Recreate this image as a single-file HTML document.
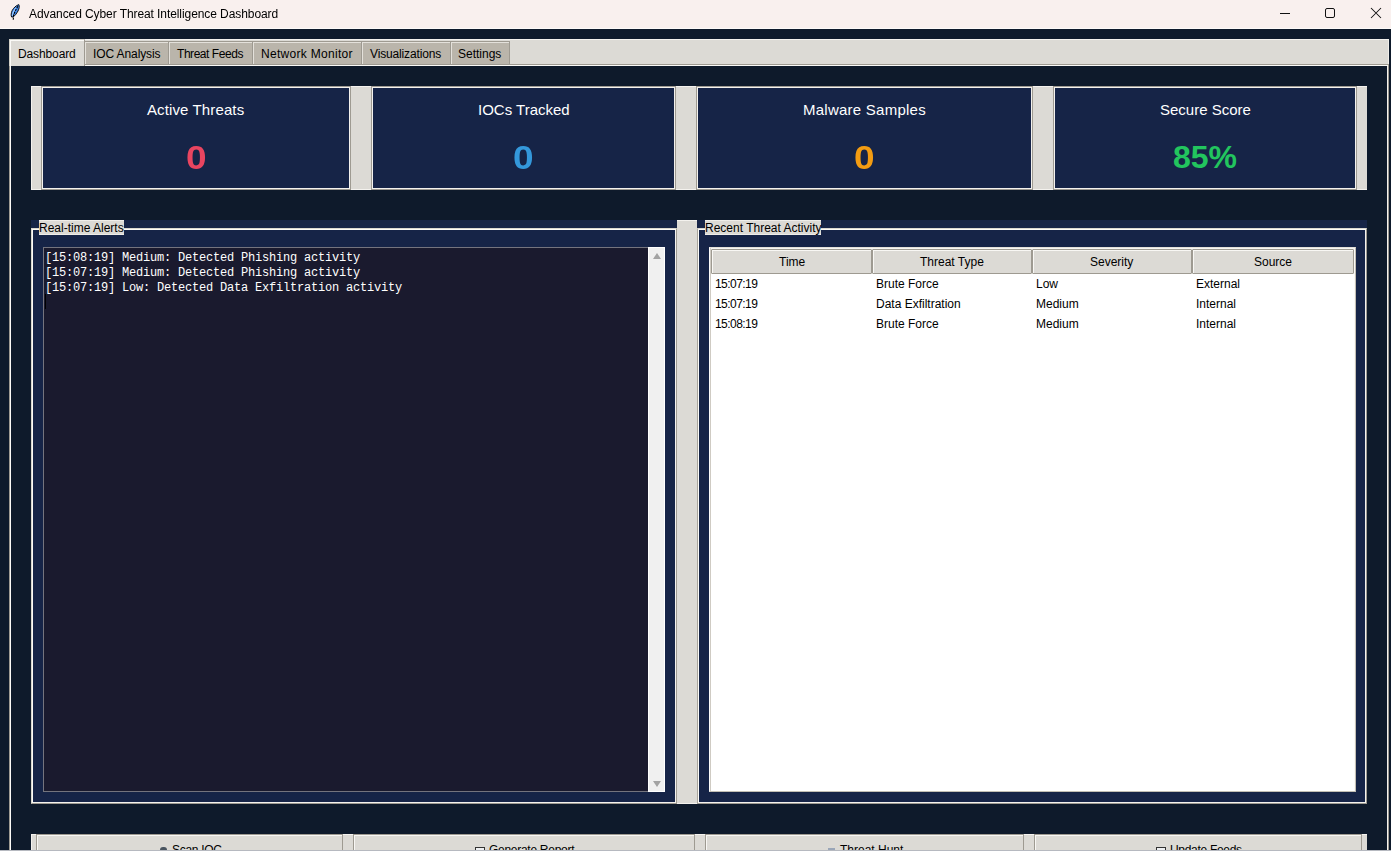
<!DOCTYPE html>
<html><head><meta charset="utf-8">
<style>
*{box-sizing:border-box;margin:0;padding:0}
html,body{width:1391px;height:851px;overflow:hidden;background:#0e1a2b;font-family:"Liberation Sans",sans-serif;font-size:12px;color:#000;position:relative}
.a{position:absolute}
.tx{position:absolute;white-space:pre;line-height:normal}
#title{left:0;top:0;width:1391px;height:29px;background:#f9f0ee}
.tab{top:41px;height:24px;background:#bab5ab;border:1px solid #9e9a91;border-bottom:1px solid #9e9a91;box-shadow:inset 1px 1px 0 #e4e1db}
.strip{background:#dcdad5}
.card{background:#162447;border:1px solid #9e9a91;box-shadow:inset 1px 1px 0 #f4f2ee,inset -1px -1px 0 #f4f2ee}
.ct{color:#fff;font-size:15px}
.cv{font-size:33px;font-weight:700;transform:scaleX(1.12);transform-origin:50% 50%}
.lf{background:#162447}
.lfb{border:1px solid #d9d6cf;border-right-color:#9e9a91;border-bottom-color:#9e9a91;box-shadow:inset 1px 1px 0 #fbfaf7,inset -1px -1px 0 #f4f2ee}
.lbl{background:#dcdad5;border-top:1px solid #efede9;border-bottom:1px solid #efede9}
.th{top:249px;height:25px;background:#dcdad5;border:1px solid #9e9a91;border-radius:1px;box-shadow:inset 1px 1px 0 #f8f7f4}
.btn{top:834px;height:20px;background:#dcdad5;border:1px solid #9e9a91;box-shadow:inset 1px 1px 0 #f8f7f4}
</style></head><body>
<div id="title" class="a"></div>
<div class="a" style="left:0;top:28px;width:1391px;height:1px;background:#fdfaf8"></div>
<svg class="a" style="left:0;top:0" width="30" height="28" viewBox="0 0 30 28">
  <path d="M18.8 4.6 C19.6 6 19.3 8.5 18 11 C16.8 13.3 15 15.6 13.2 17 L11.6 17 C10.9 15.5 11 13 12.2 10.5 C13.6 7.8 16 5.6 18.8 4.6 Z" fill="#3f88ee" stroke="#000" stroke-width="0.9"/>
  <path d="M17.6 6 C15.5 7.5 13.8 9.5 12.8 11.8 C12 13.6 11.9 15 12.1 16.2 L13 15.5 C13.8 12.5 15.5 9 17.6 6 Z" fill="#9ccbff"/>
  <path d="M17.8 6.2 L15.2 11 L13.6 15 L13.2 20.6" fill="none" stroke="#000" stroke-width="1.1" stroke-dasharray="2.2 0.9"/>
</svg>
<div class="tx" style="left:29px;top:7px;font-size:12px;letter-spacing:-0.08px;color:#000;filter:grayscale(1)">Advanced Cyber Threat Intelligence Dashboard</div>
<div class="a" style="left:1280px;top:13px;width:10px;height:1px;background:#111"></div>
<div class="a" style="left:1325px;top:8px;width:10px;height:10px;border:1px solid #111;border-radius:2px"></div>
<svg class="a" style="left:1370px;top:7px" width="12" height="12" viewBox="0 0 12 12"><path d="M1 1 L11 11 M11 1 L1 11" stroke="#111" stroke-width="1.05"/></svg>

<!-- notebook -->
<div class="a" style="left:9px;top:39px;width:1380px;height:25px;background:#dcdad5;border-top:1px solid #f2f0ec"></div>
<div class="a" style="left:1388px;top:39px;width:1px;height:25px;background:#efede9"></div>
<div class="a" style="left:9px;top:64px;width:1380px;height:800px;border:1px solid #9e9a91;box-shadow:inset 1px 1px 0 #fbfaf7,inset -1px 0 0 #f4f2ee"></div>
<!-- selected tab -->
<div class="a" style="left:9px;top:39px;width:76px;height:27px;background:#dcdad5;border-left:1px solid #d2cfc7;border-top:1px solid #d2cfc7;border-right:1px solid #9e9a91;box-shadow:inset 1px 1px 0 #fbfaf7"></div>
<div class="a tab" style="left:84px;width:85px"></div>
<div class="a tab" style="left:168px;width:85px"></div>
<div class="a tab" style="left:252px;width:110px"></div>
<div class="a tab" style="left:361px;width:90px"></div>
<div class="a tab" style="left:450px;width:60px"></div>
<div class="tx" style="left:18px;top:47px;letter-spacing:-0.12px">Dashboard</div>
<div class="tx" style="left:93px;top:47px;letter-spacing:-0.1px">IOC Analysis</div>
<div class="tx" style="left:177px;top:47px;letter-spacing:-0.45px">Threat Feeds</div>
<div class="tx" style="left:261px;top:47px;letter-spacing:0.3px">Network Monitor</div>
<div class="tx" style="left:370px;top:47px;letter-spacing:-0.15px">Visualizations</div>
<div class="tx" style="left:458px;top:47px">Settings</div>

<!-- stats -->
<div class="a strip" style="left:31px;top:86px;width:1336px;height:104px;border-top:1px solid #f4f2ee;border-left:1px solid #f4f2ee;border-bottom:1px solid #f4f2ee"></div>
<div class="a card" style="left:41px;top:86px;width:310px;height:104px"></div>
<div class="a card" style="left:371px;top:86px;width:305px;height:104px"></div>
<div class="a card" style="left:696px;top:86px;width:337px;height:104px"></div>
<div class="a card" style="left:1053px;top:86px;width:304px;height:104px"></div>

<div class="tx ct" style="left:147px;top:101px;letter-spacing:0.12px">Active Threats</div>
<div class="tx ct" style="left:478px;top:101px">IOCs Tracked</div>
<div class="tx ct" style="left:803px;top:101px;letter-spacing:0.25px">Malware Samples</div>
<div class="tx ct" style="left:1160px;top:101px">Secure Score</div>
<div class="tx cv" style="left:187px;top:139px;color:#e94560">0</div>
<div class="tx cv" style="left:514px;top:139px;color:#3498db">0</div>
<div class="tx cv" style="left:855px;top:139px;color:#f39c12">0</div>
<div class="tx cv" style="left:1173px;top:139px;color:#22c55e;font-size:32px;transform:none">85%</div>

<!-- panels -->
<div class="a strip" style="left:677px;top:220px;width:20px;height:584px;border-top:1px solid #f4f2ee;border-bottom:1px solid #f4f2ee"></div>
<div class="a lf" style="left:31px;top:220px;width:646px;height:584px"></div>
<div class="a lfb" style="left:31px;top:228px;width:646px;height:576px"></div>
<div class="a lbl" style="left:39px;top:220px;width:85px;height:15px"></div>
<div class="tx" style="left:39px;top:221px">Real-time Alerts</div>

<div class="a lf" style="left:697px;top:220px;width:670px;height:584px"></div>
<div class="a lfb" style="left:697px;top:228px;width:670px;height:576px;border-left-color:#a9a59c"></div>
<div class="a lbl" style="left:705px;top:220px;width:116px;height:15px"></div>
<div class="tx" style="left:705px;top:221px">Recent Threat Activity</div>

<!-- alerts text -->
<div class="a" style="left:43px;top:247px;width:605px;height:545px;background:#1a1a2e;border:1px solid #74747e;border-right:none"></div>
<div class="tx" style="left:45px;top:251px;font-family:'Liberation Mono',monospace;font-size:12px;letter-spacing:-0.2px;line-height:15px;color:#fff">[15:08:19] Medium: Detected Phishing activity
[15:07:19] Medium: Detected Phishing activity
[15:07:19] Low: Detected Data Exfiltration activity</div>
<div class="a" style="left:45px;top:294px;width:1px;height:15px;background:#000"></div>
<!-- scrollbar -->
<div class="a" style="left:648px;top:247px;width:17px;height:545px;background:#f0f0f0;border:1px solid #fff"></div>
<svg class="a" style="left:653px;top:253px" width="8" height="6" viewBox="0 0 8 6"><path d="M4 0 L8 6 L0 6 Z" fill="#a3a3a3"/></svg>
<svg class="a" style="left:653px;top:781px" width="8" height="6" viewBox="0 0 8 6"><path d="M0 0 L8 0 L4 6 Z" fill="#a3a3a3"/></svg>

<!-- tree -->
<div class="a" style="left:709px;top:247px;width:647px;height:545px;background:#fff;border-left:1px solid #fdfcfa;border-top:1px solid #e3e0d9;border-right:1px solid #c2beb5;border-bottom:1px solid #c2beb5;box-shadow:inset 1px 0 0 #cfcbc3,inset 0 1px 0 #f8f7f4,inset -1px 0 0 #fbfaf7"></div>
<div class="a th" style="left:711px;width:161px"></div>
<div class="a th" style="left:872px;width:160px"></div>
<div class="a th" style="left:1032px;width:160px"></div>
<div class="a th" style="left:1192px;width:162px"></div>
<div class="tx" style="left:779px;top:255px">Time</div>
<div class="tx" style="left:920px;top:255px">Threat Type</div>
<div class="tx" style="left:1090px;top:255px">Severity</div>
<div class="tx" style="left:1254px;top:255px">Source</div>

<div class="tx" style="left:715px;top:277px;letter-spacing:-0.55px">15:07:19</div>
<div class="tx" style="left:876px;top:277px">Brute Force</div>
<div class="tx" style="left:1036px;top:277px">Low</div>
<div class="tx" style="left:1196px;top:277px">External</div>
<div class="tx" style="left:715px;top:297px;letter-spacing:-0.55px">15:07:19</div>
<div class="tx" style="left:876px;top:297px">Data Exfiltration</div>
<div class="tx" style="left:1036px;top:297px">Medium</div>
<div class="tx" style="left:1196px;top:297px">Internal</div>
<div class="tx" style="left:715px;top:317px;letter-spacing:-0.55px">15:08:19</div>
<div class="tx" style="left:876px;top:317px">Brute Force</div>
<div class="tx" style="left:1036px;top:317px">Medium</div>
<div class="tx" style="left:1196px;top:317px">Internal</div>

<!-- buttons -->
<div class="a strip" style="left:31px;top:834px;width:1336px;height:20px;border-top:1px solid #f4f2ee;border-left:1px solid #f4f2ee"></div>
<div class="a btn" style="left:36px;width:307px"></div>
<div class="a btn" style="left:353px;width:342px"></div>
<div class="a btn" style="left:705px;width:319px"></div>
<div class="a btn" style="left:1034px;width:328px"></div>
<div class="tx" style="left:172px;top:843px;letter-spacing:-0.3px">Scan IOC</div>
<div class="tx" style="left:489px;top:843px;letter-spacing:-0.28px">Generate Report</div>
<div class="tx" style="left:840px;top:843px">Threat Hunt</div>
<div class="tx" style="left:1170px;top:843px;letter-spacing:-0.3px">Update Feeds</div>
<!-- button icons (partially visible) -->
<div class="a" style="left:160px;top:847px;width:7px;height:4px;border-radius:3px 3px 0 0;background:#4a5560"></div>
<div class="a" style="left:475px;top:847px;width:10px;height:4px;border:1px solid #333;border-bottom:none;background:#eef0f2"></div>
<div class="a" style="left:828px;top:848px;width:7px;height:2px;background:#9aa6b8"></div>
<div class="a" style="left:1156px;top:847px;width:10px;height:4px;border:1px solid #333;border-bottom:none;background:#eef0f2"></div>
<div class="a" style="left:0;top:850px;width:1391px;height:1px;background:#b6b9c0"></div>
</body></html>
